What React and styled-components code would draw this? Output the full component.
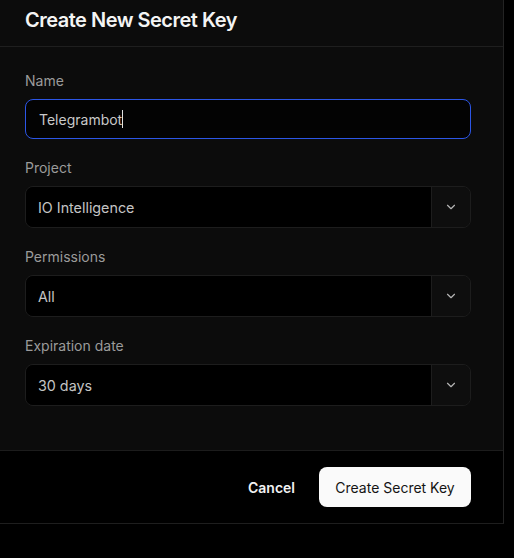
import React from "react";
import styled, { createGlobalStyle } from "styled-components";

const Global = createGlobalStyle`
  html, body { margin: 0; padding: 0; background: #000; }
  body { font-family: Inter, "Noto Sans", sans-serif; -webkit-font-smoothing: antialiased; }
`;

const Page = styled.div`
  width: 514px;
  height: 558px;
  background: #000;
  overflow: hidden;
`;

const Dialog = styled.div`
  width: 503px;
  background: #0c0c0c;
  border-right: 1px solid #232323;
  border-bottom: 1px solid #1e1e1e;
  display: flex;
  flex-direction: column;
`;

const Header = styled.div`
  height: 47px;
  box-sizing: border-box;
  padding: 6px 25px 0;
  border-bottom: 1px solid #1f1f1f;
`;

const Title = styled.h2`
  margin: 0;
  font-size: 20px;
  line-height: 28px;
  font-weight: 600;
  color: #f4f4f4;
  letter-spacing: -0.5px;
`;

const Body = styled.div`
  padding: 24px 32px 44px 25px;
  display: flex;
  flex-direction: column;
  gap: 19px;
`;

const Field = styled.div`
  display: flex;
  flex-direction: column;
  gap: 8px;
`;

const Label = styled.div`
  font-size: 14px;
  line-height: 20px;
  color: #9b9b9b;
`;

const TextBox = styled.div`
  height: 40px;
  box-sizing: border-box;
  border: 1px solid #2c56e6;
  border-radius: 8px;
  background: #030303;
  display: flex;
  align-items: center;
  padding: 0 12px 0 13px;
  font-size: 14px;
  color: #c9c9c9;
`;

const Caret = styled.span`
  display: inline-block;
  width: 1px;
  height: 18px;
  background: #e0e0e0;
`;

const Select = styled.div`
  height: 42px;
  box-sizing: border-box;
  border: 1px solid #1d1d1d;
  border-radius: 8px;
  display: flex;
  overflow: hidden;
`;

const SelectValue = styled.div`
  flex: 1;
  background: #000;
  display: flex;
  align-items: center;
  padding: 0 12px;
  font-size: 14.3px;
  color: #c4c4c4;
`;

const SelectToggle = styled.div`
  width: 38px;
  border-left: 1px solid #1d1d1d;
  background: #0e0e0e;
  display: flex;
  align-items: center;
  justify-content: center;
  color: #b5b5b5;
`;

const Footer = styled.div`
  border-top: 1px solid #1c1c1c;
  background: #000;
  padding: 16px 32px 16px 25px;
  display: flex;
  justify-content: flex-end;
  align-items: center;
  gap: 8px;
`;

const GhostButton = styled.button`
  background: transparent;
  border: none;
  color: #f2f2f2;
  font-family: inherit;
  font-size: 14px;
  font-weight: 600;
  padding: 0 16px;
  height: 40px;
`;

const PrimaryButton = styled.button`
  background: #fafafa;
  border: none;
  border-radius: 8px;
  color: #141414;
  font-family: inherit;
  font-size: 14px;
  font-weight: 400;
  height: 40px;
  width: 152px;
`;

const Chevron = () => (
  <svg width="14" height="14" viewBox="0 0 24 24" fill="none" stroke="currentColor" strokeWidth="2" strokeLinecap="round" strokeLinejoin="round">
    <path d="M6 9l6 6 6-6" />
  </svg>
);

const SelectField = ({ label, value }) => (
  <Field>
    <Label>{label}</Label>
    <Select>
      <SelectValue>{value}</SelectValue>
      <SelectToggle><Chevron /></SelectToggle>
    </Select>
  </Field>
);

export default function App() {
  return (
    <Page>
      <Global />
      <Dialog>
        <Header>
          <Title>Create New Secret Key</Title>
        </Header>
        <Body>
          <Field>
            <Label>Name</Label>
            <TextBox>Telegrambot<Caret /></TextBox>
          </Field>
          <SelectField label="Project" value="IO Intelligence" />
          <SelectField label="Permissions" value="All" />
          <SelectField label="Expiration date" value="30 days" />
        </Body>
        <Footer>
          <GhostButton>Cancel</GhostButton>
          <PrimaryButton>Create Secret Key</PrimaryButton>
        </Footer>
      </Dialog>
    </Page>
  );
}
